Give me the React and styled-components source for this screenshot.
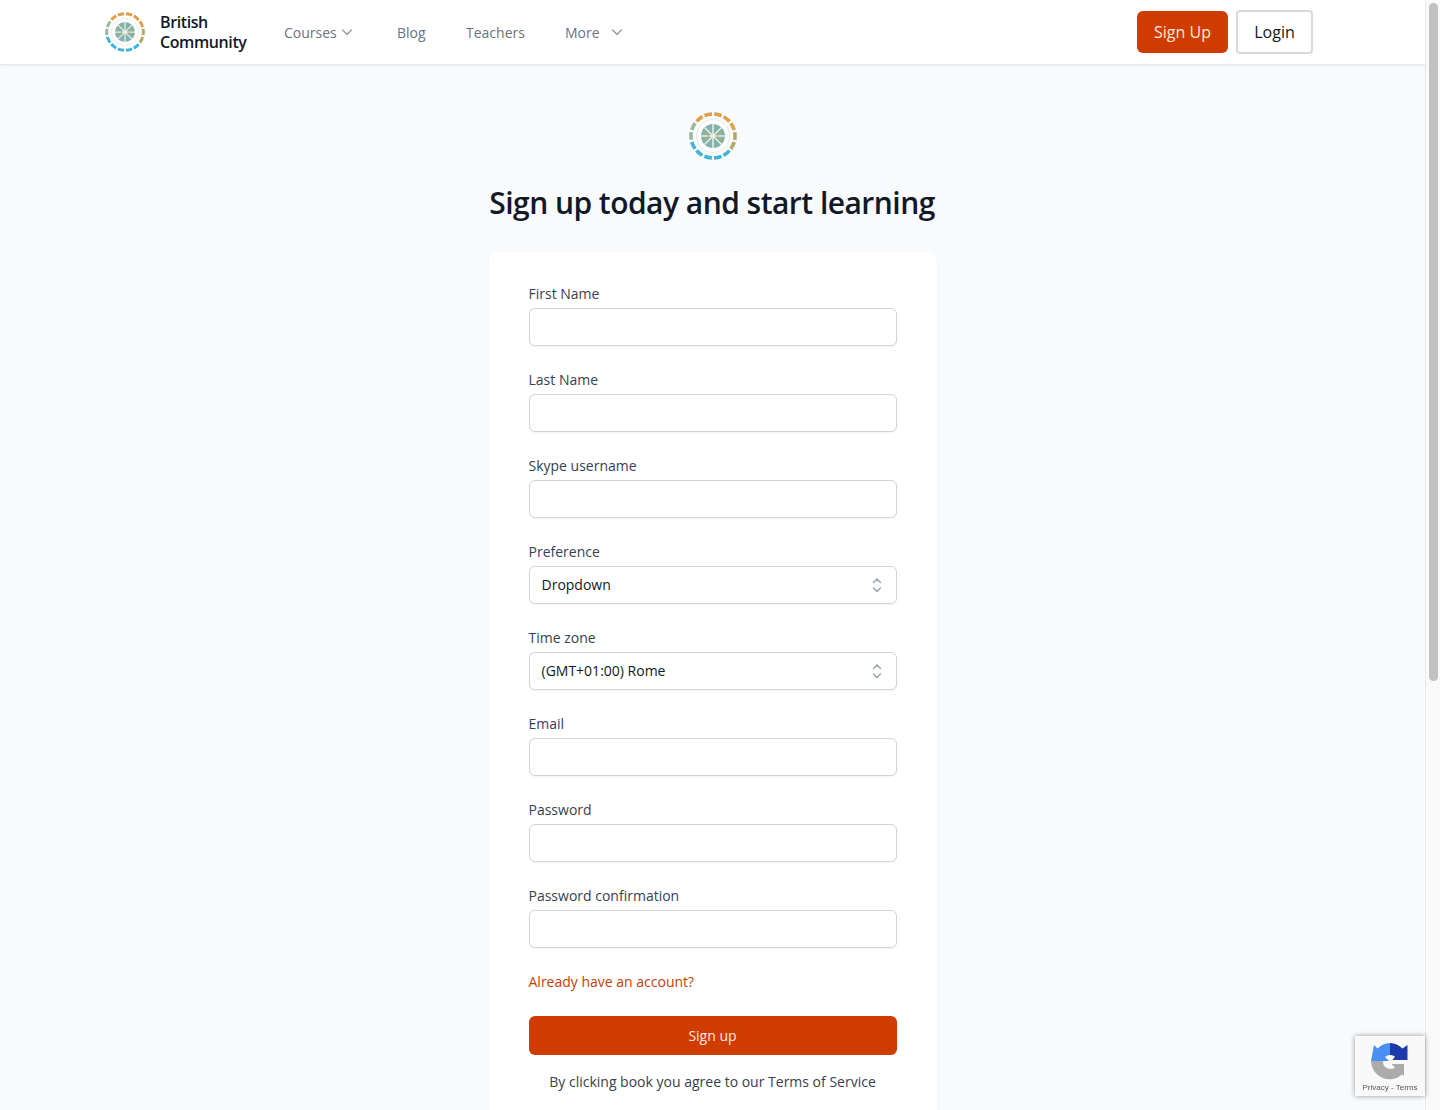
import React from "react";
import styled, { createGlobalStyle } from "styled-components";

const GlobalStyle = createGlobalStyle`
  html, body {
    margin: 0;
    padding: 0;
    height: 1110px;
    overflow: hidden;
    background: #f9fafb;
    font-family: "Open Sans", "Liberation Sans", sans-serif;
  }
  * { box-sizing: border-box; }
`;

const LogoSvg = styled.svg`
  flex-shrink: 0;
  filter: blur(0.4px);
`;

const ringColor = (a) => {
  if (a >= 290 || a < 60) return "#dfa04a";
  if (a < 120) return "#b3a866";
  if (a < 250) return "#3fb5d9";
  return "#9db8a0";
};

const Logo = ({ size }) => {
  const segments = [];
  for (let i = 0; i < 14; i++) {
    const start = (i * 360) / 14 + 3;
    const end = start + 20;
    const p = (d) => {
      const r = ((d - 90) * Math.PI) / 180;
      return [24 + 22 * Math.cos(r), 24 + 22 * Math.sin(r)];
    };
    const [x1, y1] = p(start);
    const [x2, y2] = p(end);
    segments.push(
      <path
        key={i}
        d={`M${x1} ${y1}A22 22 0 0 1 ${x2} ${y2}`}
        stroke={ringColor(start)}
        strokeWidth="3.6"
        fill="none"
      />
    );
  }
  return (
    <LogoSvg width={size} height={size} viewBox="0 0 48 48">
      {segments}
      <circle cx="24" cy="24" r="16.500" fill="#fff" stroke="#e8e9e0" strokeWidth="1" />
      <circle cx="24" cy="24" r="12" fill="#7fb3ac" />
      <path d="M24 12v24M12 24h24M15.500 15.500l17 17M32.500 15.500l-17 17" stroke="#eef0e6" strokeWidth="1.500" />
      <path d="M14 19l6 5-6 5M34 19l-6 5 6 5" stroke="#d9a65c" strokeWidth="1.200" fill="none" opacity="0.6" />
    </LogoSvg>
  );
};

const Chevron = ({ size = 16 }) => (
  <svg width={size} height={size} viewBox="0 0 20 20" fill="none" stroke="#9ca3af" strokeWidth="2" strokeLinecap="round" strokeLinejoin="round">
    <path d="M4.500 7.500 10 13l5.500-5.500" />
  </svg>
);

const Selector = () => (
  <svg width="20" height="20" viewBox="0 0 20 20" fill="none" stroke="#9ca3af" strokeWidth="1.500" strokeLinecap="round" strokeLinejoin="round">
    <path d="M6.500 7.500 10 4l3.500 3.500M6.500 13 10 16.500l3.500-3.500" />
  </svg>
);

const Recaptcha = () => (
  <svg width="38" height="38" viewBox="0 0 38 38">
    <path d="M19 0A19 19 0 0 1 31.500 5.500L36.500 2V17H21.500L24 13.500A7 7 0 0 0 19 12Z" fill="#1c3aa9" />
    <path d="M19 0V12A7 7 0 0 0 14 14L18 18H0L3 2L6.500 5.500A19 19 0 0 1 19 0Z" fill="#4a90f2" />
    <path d="M0 18H12A7.500 7.500 0 0 0 24 24.500L20.500 21H33V33L31 31.500A18.500 18.500 0 0 1 0 18Z" fill="#ababab" />
  </svg>
);

const Shell = styled.div`
  display: flex;
  height: 1110px;
  overflow: hidden;
`;

const Main = styled.div`
  flex: 1;
  min-width: 0;
`;

const Track = styled.div`
  width: 15px;
  padding: 3px 2px 0 3px;
  background: #fafafa;
  border-left: 1px solid #e8e8e8;
`;

const Thumb = styled.div`
  height: 678px;
  border-radius: 5px;
  background: #c1c1c1;
`;

const Header = styled.header`
  height: 65px;
  background: #fff;
  border-bottom: 1px solid #e5e7eb;
  box-shadow: 0 1px 2px rgba(0, 0, 0, 0.05);
  display: flex;
  align-items: center;
  padding: 0 112px 0 105px;
`;

const Brand = styled.div`
  display: flex;
  align-items: center;
  gap: 15px;
  width: 179px;
`;

const BrandName = styled.div`
  font-size: 16px;
  font-weight: 600;
  line-height: 20px;
  color: #111827;
  letter-spacing: -0.4px;
`;

const Nav = styled.nav`
  display: flex;
  align-items: center;
  flex: 1;
`;

const NavItem = styled.a`
  display: flex;
  align-items: center;
  gap: ${({ $gap }) => $gap || 0}px;
  width: ${({ $width }) => $width}px;
  font-size: 14px;
  color: #6b7280;
`;

const Actions = styled.div`
  display: flex;
  align-items: center;
  gap: 8px;
`;

const SignUpButton = styled.button`
  width: 91px;
  height: 42px;
  border: 0;
  border-radius: 6px;
  background: #cf3c00;
  color: #fde8dc;
  font: 400 16px "Open Sans", sans-serif;
`;

const LoginButton = styled.button`
  width: 77px;
  height: 44px;
  border: 2px solid #d9d9d9;
  border-radius: 4px;
  background: #fff;
  color: #111827;
  font: 400 16px "Open Sans", sans-serif;
`;

const Content = styled.main`
  display: flex;
  flex-direction: column;
  align-items: center;
  padding-top: 47px;
`;

const Title = styled.h1`
  margin: 21px 1px 27px 0;
  font-size: 30px;
  line-height: 44px;
  font-weight: 600;
  color: #111827;
  letter-spacing: -0.53px;
`;

const Card = styled.form`
  width: 448px;
  background: #fff;
  border-radius: 8px;
  box-shadow: 0 1px 2px rgba(0, 0, 0, 0.05);
  padding: 32px 40px;
  display: flex;
  flex-direction: column;
`;

const Field = styled.div`
  display: flex;
  flex-direction: column;
  margin-bottom: 24px;
`;

const Label = styled.label`
  font-size: 14px;
  line-height: 20px;
  color: #374151;
  margin-bottom: 4px;
`;

const Input = styled.div`
  height: 38px;
  border: 1px solid #d1d5db;
  border-radius: 6px;
  background: #fff;
  box-shadow: 0 1px 2px rgba(0, 0, 0, 0.05);
  display: flex;
  align-items: center;
  justify-content: space-between;
  padding: 0 9px 0 12px;
  font-size: 14px;
  line-height: 18px;
  color: #111827;
`;

const AccountLink = styled.a`
  font-size: 14px;
  line-height: 20px;
  color: #c2410c;
  margin-bottom: 24px;
`;

const Submit = styled.button`
  height: 39px;
  border: 0;
  border-radius: 6px;
  background: #cf3c00;
  color: #fde8dc;
  font: 400 14px "Open Sans", sans-serif;
`;

const Terms = styled.div`
  height: 38px;
  font-size: 14px;
  line-height: 54px;
  text-align: center;
  color: #374151;
  border-radius: 6px;
  box-shadow: 0 1px 2px rgba(0, 0, 0, 0.02);
`;

const Badge = styled.div`
  position: fixed;
  left: 1355px;
  top: 1036px;
  width: 70px;
  height: 60px;
  background: #f9f9f9;
  box-shadow: 0 0 5px rgba(0, 0, 0, 0.4);
  display: flex;
  flex-direction: column;
  align-items: center;
  padding-top: 7px;
`;

const BadgeText = styled.div`
  font: 400 8px "Liberation Sans", sans-serif;
  color: #555;
  margin-top: 2px;
  white-space: nowrap;
`;

const fields = [
  { label: "First Name" },
  { label: "Last Name" },
  { label: "Skype username" },
  { label: "Preference", value: "Dropdown" },
  { label: "Time zone", value: "(GMT+01:00) Rome" },
  { label: "Email" },
  { label: "Password" },
  { label: "Password confirmation" },
];

export default function App() {
  return (
    <Shell>
      <GlobalStyle />
      <Main>
        <Header>
          <Brand>
            <Logo size={40} />
            <BrandName>
              British
              <br />
              Community
            </BrandName>
          </Brand>
          <Nav>
            <NavItem $width={113} $gap={2}>
              Courses <Chevron />
            </NavItem>
            <NavItem $width={69}>Blog</NavItem>
            <NavItem $width={99}>Teachers</NavItem>
            <NavItem $width={80} $gap={9}>
              More <Chevron />
            </NavItem>
          </Nav>
          <Actions>
            <SignUpButton>Sign Up</SignUpButton>
            <LoginButton>Login</LoginButton>
          </Actions>
        </Header>
        <Content>
          <Logo size={48} />
          <Title>Sign up today and start learning</Title>
          <Card>
            {fields.map((f) => (
              <Field key={f.label}>
                <Label>{f.label}</Label>
                <Input>
                  <span>{f.value}</span>
                  {f.value && <Selector />}
                </Input>
              </Field>
            ))}
            <AccountLink>Already have an account?</AccountLink>
            <Submit type="button">Sign up</Submit>
            <Terms>By clicking book you agree to our Terms of Service</Terms>
          </Card>
        </Content>
      </Main>
      <Track>
        <Thumb />
      </Track>
      <Badge>
        <Recaptcha />
        <BadgeText>Privacy - Terms</BadgeText>
      </Badge>
    </Shell>
  );
}
